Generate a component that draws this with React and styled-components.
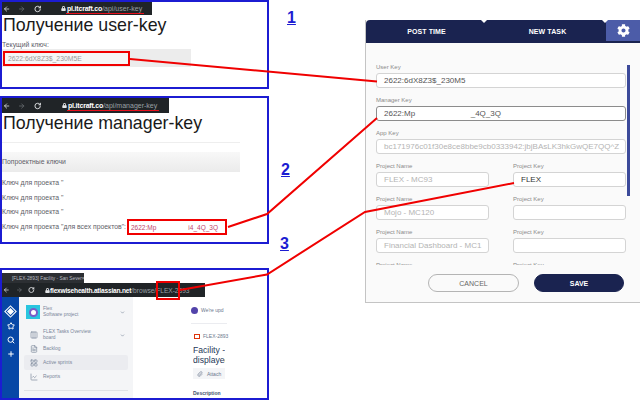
import React from "react";
import styled, { createGlobalStyle } from "styled-components";
import { ArrowLeft, ArrowRight, RotateCw, Star, Search, Plus, ChevronDown, Paperclip, LineChart, Columns3, FileText, LayoutGrid } from "lucide-react";
import { FaCog, FaLock } from "react-icons/fa";

const GlobalStyle = createGlobalStyle`
  html, body {
    margin: 0;
    padding: 0;
    background: #fff;
    font-family: "Liberation Sans", Arial, sans-serif;
    overflow: hidden;
  }
`;

const Canvas = styled.div`
  position: relative;
  width: 640px;
  height: 400px;
  display: flex;
  overflow: hidden;
`;

const LeftColumn = styled.div`
  width: 269px;
  display: flex;
  flex-direction: column;
`;

const Shot = styled.div`
  box-sizing: border-box;
  height: ${props => props.$height}px;
  margin-bottom: ${props => props.$gap || 0}px;
  border: 2px solid #1c1cd2;
  overflow: hidden;
  display: flex;
  flex-direction: column;
`;

const UrlBar = styled.div`
  box-sizing: border-box;
  width: ${props => props.$width}px;
  height: ${props => props.$height || 13}px;
  flex: none;
  background: #202427;
  color: #9aa0a6;
  display: flex;
  align-items: center;
  padding-left: 1px;
  font-size: 7px;
  white-space: nowrap;
`;

const UrlIcons = styled.div`
  display: flex;
  align-items: center;
  gap: ${props => props.$gap}px;
  flex: none;
  width: ${props => props.$width}px;
  color: #e4e6e8;
`;

const LockSlot = styled.span`
  display: flex;
  margin-left: ${props => props.$space}px;
`;

const Host = styled.span`
  color: #fff;
  font-weight: 700;
  letter-spacing: -0.2px;
`;

const UrlText = styled.span`
  font-size: ${props => props.$size || 7}px;
`;

const Underlined = styled.span`
  display: inline-block;
  border-bottom: 1px solid #e8101c;
  padding: 0 2px 0 1px;
  line-height: 9px;
  margin-top: 1px;
`;

const PageTitle = styled.h1`
  margin: 0 0 0 1px;
  font-size: 17.8px;
  line-height: 20px;
  font-weight: 400;
  color: #1a1a1a;
  white-space: nowrap;
`;

const SmallText = styled.div`
  font-size: 6.85px;
  line-height: 8px;
  color: #5e5e68;
  white-space: nowrap;
`;

const KeyLabel = styled(SmallText)`
  margin-top: 6px;
`;

const KeyArea = styled.div`
  width: 189px;
  height: 18px;
  background: #ececec;
  display: flex;
  align-items: center;
`;

const KeyValue = styled.div`
  box-sizing: border-box;
  width: 127px;
  height: 15px;
  margin-left: 1px;
  padding-left: 3px;
  background: #f6f6f6;
  border: 2px solid #f00000;
  color: #9a9a9a;
  font-size: 6.8px;
  line-height: 11px;
  white-space: nowrap;
`;

const Rule = styled.div`
  width: 238px;
  height: 1px;
  margin-top: 9px;
  background: #eeeeee;
`;

const GroupBar = styled.div`
  width: 238px;
  height: 20px;
  margin: 9px 0 7px;
  background: linear-gradient(#f8f8f8, #ebebeb);
  display: flex;
  align-items: center;
`;

const KeyRows = styled.div`
  display: flex;
  flex-direction: column;
  gap: 6.7px;
`;

const KeyRow = styled.div`
  display: flex;
  align-items: center;
  height: 8px;
`;

const ManagerValue = styled.div`
  box-sizing: border-box;
  width: 100px;
  height: 16px;
  padding: 0 7px 0 2px;
  flex: none;
  margin-left: 1px;
  border: 2px solid #f00000;
  background: #fff;
  color: #c0446c;
  font-size: 6.5px;
  display: flex;
  align-items: center;
  justify-content: space-between;
`;

const BrowserTab = styled.div`
  box-sizing: border-box;
  width: 82px;
  height: 10px;
  margin-top: 3px;
  flex: none;
  background: #2c2f33;
  color: #b9bcc0;
  font-size: 4.8px;
  padding: 0 3px 0 10px;
  display: flex;
  align-items: center;
  justify-content: space-between;
  white-space: nowrap;
  overflow: hidden;
`;

const JiraBody = styled.div`
  flex: 1;
  display: flex;
  min-height: 0;
`;

const GlobalNav = styled.div`
  width: 17px;
  background: #0747a6;
  color: #fff;
  flex: none;
  display: flex;
  flex-direction: column;
  align-items: center;
  gap: 6px;
  padding-top: 10px;
  box-sizing: border-box;
`;

const Diamond = styled.div`
  width: 5px;
  height: 5px;
  margin: 1px 0;
  background: #fff;
  border: 1.5px solid #0747a6;
  outline: 1px solid #fff;
  transform: rotate(45deg);
`;

const Sidebar = styled.div`
  box-sizing: border-box;
  width: 114px;
  flex: none;
  background: #f4f5f7;
  padding: 8px 5px 0;
  color: #6b778c;
  font-size: 4.9px;
`;

const NavRow = styled.div`
  display: flex;
  align-items: center;
  gap: ${props => props.$inner || 5}px;
  line-height: 6px;
  height: ${props => props.$height || 12}px;
  margin-bottom: ${props => props.$gap || 0}px;
  padding: 0 3px 0 ${props => props.$pad || 6}px;
  border-radius: 2px;
  background: ${props => (props.$active ? "#ebecf0" : "transparent")};
  color: #7a869a;
  white-space: nowrap;
`;

const Avatar = styled.div`
  width: 14px;
  height: 14px;
  flex: none;
  background: #29c5df;
  display: flex;
  align-items: center;
  justify-content: center;
`;

const AvatarDot = styled.div`
  width: 9px;
  height: 9px;
  border-radius: 50%;
  background: #fff;
  border: 2px solid #7a5cc8;
  box-sizing: border-box;
`;

const Grow = styled.div`
  flex: 1;
`;

const SideRule = styled.div`
  height: 1px;
  margin-top: 7px;
  background: #dfe1e6;
`;

const IssuePane = styled.div`
  flex: 1;
  min-width: 0;
  padding: 8px 0 0 58px;
  color: #6b778c;
  font-size: 5px;
  overflow: hidden;
`;

const Notice = styled.div`
  display: flex;
  align-items: center;
  gap: 3px;
  height: 10px;
  padding-bottom: 8px;
  border-bottom: 1px solid #ebecf0;
  width: 36px;
  white-space: nowrap;
`;

const InfoDot = styled.span`
  width: 7px;
  height: 7px;
  border-radius: 50%;
  background: #5243aa;
  flex: none;
`;

const IssueKey = styled.div`
  display: flex;
  align-items: center;
  gap: 3px;
  margin: 9px 0 0 3px;
`;

const RedSquare = styled.span`
  box-sizing: border-box;
  width: 6px;
  height: 5px;
  border: 1.5px solid #de350b;
  background: #fff;
`;

const IssueTitle = styled.div`
  margin: 6px 0 0 2px;
  font-size: 8.6px;
  line-height: 10px;
  color: #253858;
  width: 32px;
  overflow: hidden;
  white-space: nowrap;
`;

const AttachButton = styled.div`
  display: flex;
  align-items: center;
  gap: 4px;
  width: 32px;
  height: 11px;
  margin: 3px 0 0 2px;
  padding-left: 4px;
  box-sizing: border-box;
  background: #f4f5f7;
`;

const Description = styled.div`
  margin: 11px 0 0 2px;
  font-weight: 700;
  color: #42526e;
`;

const Popup = styled.div`
  box-sizing: border-box;
  width: 275px;
  height: 283px;
  margin: 20px 0 0 96px;
  flex: none;
  background: #fafafa;
  border-left: 1px solid #c4c4c4;
  border-bottom: 1px solid #c4c4c4;
  display: flex;
  flex-direction: column;
`;

const Tabs = styled.div`
  height: 23px;
  flex: none;
  background: #1a2350;
  border-radius: 4px 3px 0 0;
  display: flex;
`;

const Tab = styled.div`
  position: relative;
  width: 121px;
  display: flex;
  align-items: center;
  justify-content: center;
  color: #fff;
  font-size: 7px;
  font-weight: 700;
  letter-spacing: 0.1px;

  &::after {
    content: "";
    position: absolute;
    top: 0;
    right: 0;
    border-left: 3px solid transparent;
    border-right: 3px solid transparent;
    border-top: 3px solid #fff;
  }
`;

const GearTab = styled.div`
  flex: 1;
  margin-left: -2px;
  height: 21px;
  background: #4c5ca8;
  display: flex;
  align-items: center;
  justify-content: center;
  color: #fff;
`;

const ScrollArea = styled.div`
  position: relative;
  height: 202px;
  flex: none;
  margin: 20px 0 9px;
  overflow: hidden;
  padding: 0 14px 0 10px;
`;

const Thumb = styled.div`
  position: absolute;
  top: 2px;
  right: 10px;
  width: 3px;
  height: 131px;
  background: #3c4a9a;
`;

const FieldGrid = styled.div`
  display: grid;
  grid-template-columns: 113px 113px;
  justify-content: space-between;
  row-gap: 8px;
`;

const Field = styled.div`
  grid-column: ${props => (props.$wide ? "1 / -1" : "auto")};
`;

const FieldLabel = styled.div`
  font-size: 6px;
  line-height: 9px;
  height: 9px;
  color: #8a8a8a;
  margin-bottom: 1px;
`;

const FieldInput = styled.div`
  box-sizing: border-box;
  height: 15px;
  padding-left: 7px;
  background: #fff;
  border: 1px solid ${props => (props.$focus ? "#8c8c8c" : "#d4d4d4")};
  border-radius: 3px;
  font-size: 8px;
  line-height: 13px;
  overflow: hidden;
  color: ${props => props.$color || "#555"};
  white-space: pre;
`;

const Footer = styled.div`
  display: flex;
  gap: 15px;
  padding-left: 62px;
`;

const PillButton = styled.div`
  box-sizing: border-box;
  width: ${props => (props.$primary ? 90 : 91)}px;
  height: 18px;
  border-radius: 9px;
  display: flex;
  align-items: center;
  justify-content: center;
  font-size: 7px;
  font-weight: ${props => (props.$primary ? 700 : 400)};
  color: ${props => (props.$primary ? "#fff" : "#666")};
  background: ${props => (props.$primary ? "#1a2350" : "#fafafa")};
  border: 1px solid ${props => (props.$primary ? "#1a2350" : "#b4b4b4")};
`;

const StepNumber = styled.a`
  position: absolute;
  left: ${props => props.$x}px;
  top: ${props => props.$y}px;
  color: #1c1cd2;
  font-size: 16px;
  font-weight: 700;
  line-height: 18px;
  text-decoration: underline;
`;

const Arrows = styled.svg`
  position: absolute;
  left: 0;
  top: 0;
  pointer-events: none;
`;

const RedMark = styled.div`
  position: absolute;
  left: 156px;
  top: 281px;
  box-sizing: border-box;
  width: 24px;
  height: 19px;
  border: 2px solid #f00000;
`;

const muted = "#b4b4b4";

const BrowserIcons = ({ width, gap, space }) => (
  <UrlIcons $width={width} $gap={gap}>
    <ArrowLeft size={8} strokeWidth={2.5} />
    <ArrowRight size={8} strokeWidth={2.5} color="#6a6e72" />
    <RotateCw size={8} strokeWidth={3} />
    <LockSlot $space={space}><FaLock size={5} /></LockSlot>
  </UrlIcons>
);

const App = () => {
  return (
    <Canvas>
      <GlobalStyle />
      <LeftColumn>
        <Shot $height={89} $gap={7}>
          <UrlBar $width={150}>
            <BrowserIcons width={63} gap={8} space={12} />
            <Underlined>
              <Host>pl.itcraft.co</Host>/api/user-key
            </Underlined>
          </UrlBar>
          <PageTitle>Получение user-key</PageTitle>
          <KeyLabel>Текущий ключ:</KeyLabel>
          <KeyArea>
            <KeyValue>2622:6dX8Z3$_230M5E</KeyValue>
          </KeyArea>
        </Shot>
        <Shot $height={148} $gap={24}>
          <UrlBar $width={167} $height={15}>
            <BrowserIcons width={64} gap={8} space={13} />
            <Underlined>
              <Host>pl.itcraft.co</Host>/api/manager-key
            </Underlined>
          </UrlBar>
          <PageTitle>Получение manager-key</PageTitle>
          <Rule />
          <GroupBar>
            <SmallText>Попроектные ключи</SmallText>
          </GroupBar>
          <KeyRows>
            <KeyRow><SmallText>Ключ для проекта "</SmallText></KeyRow>
            <KeyRow><SmallText>Ключ для проекта "</SmallText></KeyRow>
            <KeyRow><SmallText>Ключ для проекта "</SmallText></KeyRow>
            <KeyRow>
              <SmallText>Ключ для проекта "для всех проектов":</SmallText>
              <ManagerValue>
                <span>2622:Mp</span>
                <span>i4_4Q_3Q</span>
              </ManagerValue>
            </KeyRow>
          </KeyRows>
        </Shot>
        <Shot $height={132}>
          <BrowserTab>
            <span>[FLEX-2893] Facility - San Sever</span>
            <span>×</span>
          </BrowserTab>
          <UrlBar $width={203} $height={14}>
            <BrowserIcons width={47} gap={6} space={4} />
            <UrlText $size={6.6}>
              <Host>flexwisehealth.atlassian.net</Host>/browse/FLEX-2893
            </UrlText>
          </UrlBar>
          <JiraBody>
            <GlobalNav>
              <Diamond />
              <Star size={8} strokeWidth={3} />
              <Search size={8} strokeWidth={3} />
              <Plus size={8} strokeWidth={3} />
            </GlobalNav>
            <Sidebar>
              <NavRow $height={14} $gap={10} $pad={2} $inner={3}>
                <Avatar><AvatarDot /></Avatar>
                <div>Flex<br />Software project</div>
                <Grow />
                <ChevronDown size={5} strokeWidth={3} />
              </NavRow>
              <NavRow $gap={2}>
                <Columns3 size={8} />
                <div>FLEX Tasks Overview<br />board</div>
                <Grow />
                <ChevronDown size={5} strokeWidth={3} />
              </NavRow>
              <NavRow>
                <FileText size={8} />
                <div>Backlog</div>
              </NavRow>
              <NavRow $height={15} $gap={1} $active>
                <LayoutGrid size={8} />
                <div>Active sprints</div>
              </NavRow>
              <NavRow>
                <LineChart size={8} />
                <div>Reports</div>
              </NavRow>
              <SideRule />
            </Sidebar>
            <IssuePane>
              <Notice><InfoDot />We're upd</Notice>
              <IssueKey><RedSquare />FLEX-2893</IssueKey>
              <IssueTitle>Facility -<br />displayed</IssueTitle>
              <AttachButton><Paperclip size={6} />Attach</AttachButton>
              <Description>Description</Description>
            </IssuePane>
          </JiraBody>
        </Shot>
      </LeftColumn>

      <Popup>
        <Tabs>
          <Tab>POST TIME</Tab>
          <Tab>NEW TASK</Tab>
          <GearTab><FaCog size={13} /></GearTab>
        </Tabs>
        <ScrollArea>
          <Thumb />
          <FieldGrid>
            <Field $wide>
              <FieldLabel>User Key</FieldLabel>
              <FieldInput>2622:6dX8Z3$_230M5</FieldInput>
            </Field>
            <Field $wide>
              <FieldLabel>Manager Key</FieldLabel>
              <FieldInput $focus>2622:Mp                         _4Q_3Q</FieldInput>
            </Field>
            <Field $wide>
              <FieldLabel>App Key</FieldLabel>
              <FieldInput $color={muted}>bc171976c01f30e8ce8bbe9cb0333942:jbjBAsLK3hkGwQE7QQ^Z</FieldInput>
            </Field>
            <Field>
              <FieldLabel>Project Name</FieldLabel>
              <FieldInput $color={muted}>FLEX - MC93</FieldInput>
            </Field>
            <Field>
              <FieldLabel>Project Key</FieldLabel>
              <FieldInput $color="#333">FLEX</FieldInput>
            </Field>
            <Field>
              <FieldLabel>Project Name</FieldLabel>
              <FieldInput $color={muted}>Mojo - MC120</FieldInput>
            </Field>
            <Field>
              <FieldLabel>Project Key</FieldLabel>
              <FieldInput />
            </Field>
            <Field>
              <FieldLabel>Project Name</FieldLabel>
              <FieldInput $color={muted}>Financial Dashboard - MC1</FieldInput>
            </Field>
            <Field>
              <FieldLabel>Project Key</FieldLabel>
              <FieldInput />
            </Field>
            <Field>
              <FieldLabel>Project Name</FieldLabel>
            </Field>
            <Field>
              <FieldLabel>Project Key</FieldLabel>
            </Field>
          </FieldGrid>
        </ScrollArea>
        <Footer>
          <PillButton>CANCEL</PillButton>
          <PillButton $primary>SAVE</PillButton>
        </Footer>
      </Popup>

      <StepNumber $x={287} $y={9}>1</StepNumber>
      <StepNumber $x={281} $y={161}>2</StepNumber>
      <StepNumber $x={280} $y={235}>3</StepNumber>
      <RedMark />
      <Arrows width="640" height="400" fill="none" stroke="#f00000" strokeWidth="2">
        <path d="M130 59L377 81.5" />
        <path d="M228 227L267 214L377 118" />
        <path d="M180 290L267 274.5L365 212L514 183" />
      </Arrows>
    </Canvas>
  );
};

export default App;
